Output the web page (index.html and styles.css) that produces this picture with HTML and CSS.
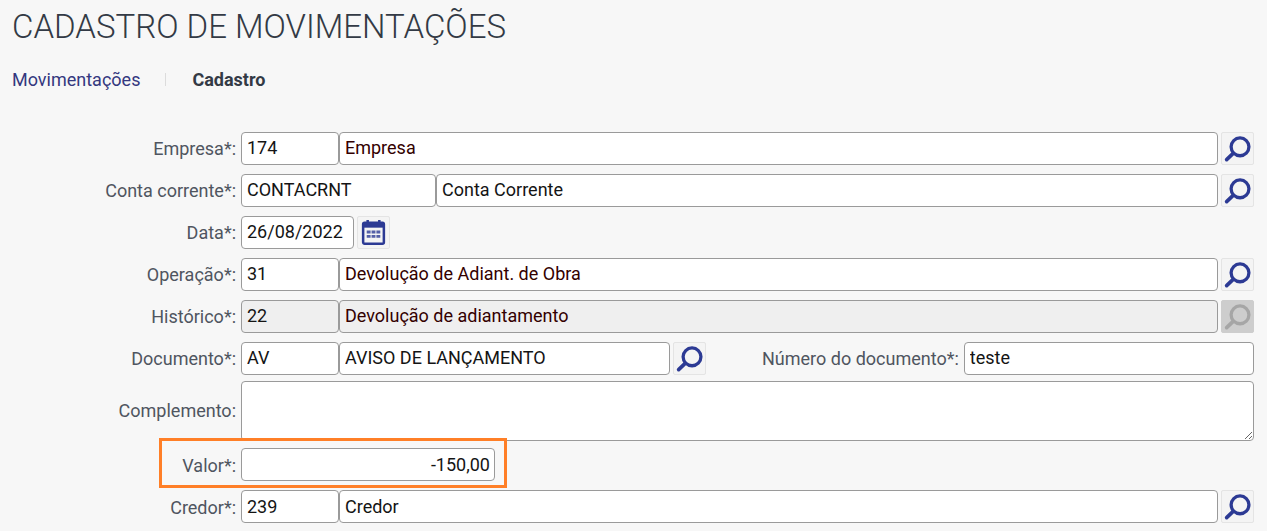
FILE: index.html
```html
<!DOCTYPE html>
<html lang="pt-BR">
<head>
<meta charset="utf-8">
<title>Cadastro de Movimentações</title>
<link rel="stylesheet" href="styles.css">
</head>
<body>
<svg class="defs" width="0" height="0" aria-hidden="true">
  <defs>
    <symbol id="lupa" viewBox="0 0 32 32">
      <circle cx="18.6" cy="14.3" r="9.2" fill="none" stroke="currentColor" stroke-width="3.4"/>
      <path d="M11.5 21 L4.800 27.500" fill="none" stroke="currentColor" stroke-width="3.800" stroke-linecap="round"/>
    </symbol>
  </defs>
</svg>
<main class="page">
  <h1 class="title">CADASTRO DE MOVIMENTAÇÕES</h1>
  <nav class="crumbs">
    <a class="crumb-link">Movimentações</a>
    <span class="crumb-sep"></span>
    <span class="crumb-current">Cadastro</span>
  </nav>
  <form class="form">
    <div class="row">
      <label class="label">Empresa*:</label>
      <input class="input code" value="174">
      <input class="input grow tinted" value="Empresa">
      <button type="button" class="icon-btn"><svg class="icon"><use href="#lupa"/></svg></button>
    </div>
    <div class="row">
      <label class="label">Conta corrente*:</label>
      <input class="input code-wide" value="CONTACRNT">
      <input class="input grow" value="Conta Corrente">
      <button type="button" class="icon-btn"><svg class="icon"><use href="#lupa"/></svg></button>
    </div>
    <div class="row">
      <label class="label">Data*:</label>
      <input class="input date" value="26/08/2022">
      <button type="button" class="icon-btn">
        <svg class="icon" viewBox="0 0 32 32">
          <path d="M10 3v5M22 3v5" stroke="currentColor" stroke-width="2.6" fill="none"/>
          <rect x="5.3" y="6" width="21.4" height="21.6" rx="1.5" fill="none" stroke="currentColor" stroke-width="2.6"/>
          <rect x="5.3" y="6" width="21.4" height="5" fill="currentColor"/>
          <path d="M9 14h4v3h-4zM14 14h4v3h-4zM19 14h4v3h-4zM9 18.500h4v3h-4zM14 18.500h4v3h-4zM19 18.500h4v3h-4z" fill="currentColor" fill-opacity=".8"/>
        </svg>
      </button>
    </div>
    <div class="row">
      <label class="label">Operação*:</label>
      <input class="input code" value="31">
      <input class="input grow tinted" value="Devolução de Adiant. de Obra">
      <button type="button" class="icon-btn"><svg class="icon"><use href="#lupa"/></svg></button>
    </div>
    <div class="row">
      <label class="label">Histórico*:</label>
      <input class="input code is-disabled" value="22" readonly>
      <input class="input grow is-disabled tinted" value="Devolução de adiantamento" readonly>
      <button type="button" class="icon-btn btn-disabled"><svg class="icon"><use href="#lupa"/></svg></button>
    </div>
    <div class="row">
      <label class="label">Documento*:</label>
      <input class="input code" value="AV">
      <input class="input doc-name" value="AVISO DE LANÇAMENTO">
      <button type="button" class="icon-btn"><svg class="icon"><use href="#lupa"/></svg></button>
      <label class="label-inline">Número do documento*:</label>
      <input class="input grow" value="teste">
    </div>
    <div class="row row-text">
      <label class="label label-mid">Complemento:</label>
      <textarea class="input textarea"></textarea>
    </div>
    <div class="row row-value row-low">
      <label class="label">Valor*:</label>
      <input class="input value" value="-150,00">
      <span class="highlight"></span>
    </div>
    <div class="row row-low">
      <label class="label">Credor*:</label>
      <input class="input code" value="239">
      <input class="input grow" value="Credor">
      <button type="button" class="icon-btn"><svg class="icon"><use href="#lupa"/></svg></button>
    </div>
  </form>
</main>
</body>
</html>
```

FILE: styles.css
```css
* { box-sizing: border-box; }
html, body { margin: 0; height: 100%; overflow: hidden; }
body {
  background: #f7f7f7;
  font-family: Roboto, "Liberation Sans", sans-serif;
  font-size: 18px;
  color: #1c1c1c;
}
.defs { position: absolute; }
.page { padding: 0 13px 0 12px; }
.title {
  margin: 0;
  padding-top: 9px;
  font-size: 33px;
  line-height: 36px;
  font-weight: 300;
  color: #333a45;
}
.crumbs {
  display: flex;
  align-items: center;
  height: 22px;
  margin-top: 23px;
  font-size: 18px;
}
.crumb-link { color: #34387f; }
.crumb-sep { width: 1px; height: 13px; margin: 0 26px 0 25px; background: #dcdcdc; }
.crumb-current { font-weight: 700; color: #333a45; }
.form { display: flex; flex-direction: column; gap: 9px; margin-top: 42px; }
.row { position: relative; display: flex; align-items: flex-start; height: 33px; }
.label {
  flex: none;
  width: 224px;
  margin-right: 5px;
  line-height: 33px;
  text-align: right;
  color: #4f5560;
}
.label-mid { line-height: 60px; }
.label-inline {
  flex: none;
  margin-left: 56px;
  margin-right: 5px;
  line-height: 33px;
  color: #4f5560;
}
.input {
  display: block;
  height: 33px;
  margin: 0;
  padding: 0 5px 2px;
  border: 1px solid #9a9a9a;
  border-radius: 4px;
  background: #fff;
  font: inherit;
  color: #141414;
  outline: none;
}
.tinted { color: #300; }
.code { flex: none; width: 98px; }
.code-wide { flex: none; width: 195px; }
.date { flex: none; width: 113px; }
.doc-name { flex: none; width: 331px; }
.grow { flex: 1 1 0; min-width: 0; }
.value { flex: none; width: 254px; padding-right: 4px; text-align: right; }
.is-disabled { background: #efefef; }
.icon-btn {
  flex: none;
  width: 33px;
  height: 33px;
  margin: 0 0 0 3px;
  padding: 0;
  border: 1px solid #e4e4e4;
  border-radius: 2px;
  background: #f4f4f4;
  color: #2c3a94;
}
.icon { display: block; width: 31px; height: 31px; }
.btn-disabled { background: #cdcdcd; border-color: #cdcdcd; color: #a6a6a6; }
.row-text { height: 60px; margin-top: -3px; }
.textarea { flex: 1 1 0; height: 60px; resize: both; }
.row-value { margin-top: -2px; }
.row-low .input { padding-bottom: 0; }
.row-low .label { line-height: 35px; }
.highlight {
  position: absolute;
  left: 147px;
  top: -10px;
  width: 348px;
  height: 50px;
  border: 3px solid #ff7f27;
  pointer-events: none;
}
```
